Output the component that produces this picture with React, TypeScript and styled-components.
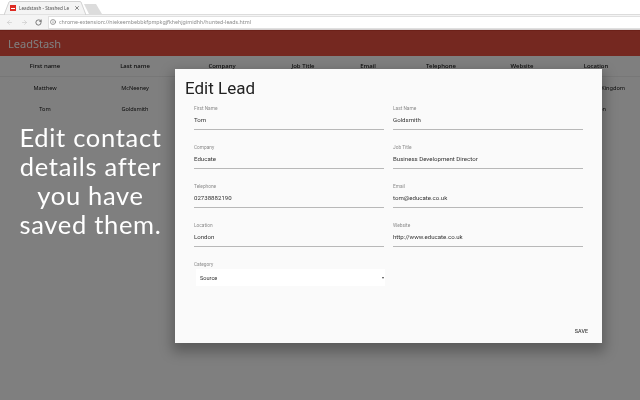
import React from "react";
import styled, { createGlobalStyle } from "styled-components";
import { ArrowLeft, ArrowRight, RotateCw, Info, X } from "lucide-react";

const Global = createGlobalStyle`
  html, body { margin: 0; padding: 0; width: 640px; height: 400px; overflow: hidden; background: #fff; }
  body { font-family: "Noto Sans", "Open Sans", sans-serif; }
`;

const Screen = styled.div`
  width: 640px; height: 400px; display: flex; flex-direction: column; overflow: hidden;
  will-change: transform; transform: translateZ(0);
`;
const TabStrip = styled.div`
  height: 14px; flex: none; display: flex; align-items: flex-end; padding-left: 4px;
  background: #fff; border-bottom: 1px solid #dcdcdc;
`;
const Tab = styled.div`
  position: relative; width: 82px; height: 14px; margin-bottom: -1px; display: flex; align-items: center;
  padding: 0 6px; box-sizing: border-box; gap: 3px;
  & > svg.shape { position: absolute; left: 0; top: 0; }
`;
const Favicon = styled.span`
  position: relative; width: 6px; height: 6px; background: #dd2a22; flex: none;
  &::after { content: ""; position: absolute; left: 1px; right: 1px; top: 3px; height: 1px; background: #fff; }
`;
const TabTitle = styled.span`
  position: relative; font-size: 4.7px; color: #555; white-space: nowrap; width: 53px;
`;
const TabClose = styled(X)`
  position: relative; flex: none; color: #444;
`;
const NewTab = styled.svg`
  flex: none; margin-left: -2px;
`;
const AddressBar = styled.div`
  height: 15px; flex: none; box-sizing: border-box; background: #f4f4f4; display: flex; align-items: center;
  padding-left: 6px; border-bottom: 1px solid #d4d0d0;
`;
const NavIcon = styled.span<{ $c: string; $w: number }>`
  width: ${(p) => p.$w}px; display: flex; color: ${(p) => p.$c}; flex: none;
`;
const UrlBox = styled.div`
  flex: 1; height: 13px; background: #fff; display: flex; align-items: center; gap: 1px; padding-left: 1px;
  box-sizing: border-box; border: 1px solid #e0e0e0; border-right: none; margin-left: 1px;
`;
const UrlText = styled.span`
  font-size: 5.3px; color: #8a8a8a; white-space: nowrap;
`;
const Page = styled.div`
  position: relative; flex: 1; display: flex; flex-direction: column; background: #fff;
`;
const Header = styled.div`
  height: 26px; flex: none; background: #ea5141; display: flex; align-items: center; padding-left: 8px;
  color: #fff; font-size: 11px; border-top: 1px solid #d84030; box-sizing: border-box;
`;
const Row = styled.div<{ $head?: boolean }>`
  display: grid; grid-template-columns: 90px 90px 84px 78px 52px 94px 68px 80px; flex: none;
  height: ${(p) => (p.$head ? 20 : 21.5)}px; align-items: center; text-align: center;
  font-size: ${(p) => (p.$head ? 6 : 5.6)}px; color: #111; font-weight: ${(p) => (p.$head ? 500 : 400)};
  white-space: nowrap;
  ${(p) => p.$head && "border-bottom: 1px solid #eee;"}
`;
const Cell = styled.span``;
const Overlay = styled.div`
  position: absolute; inset: 0; background: rgba(0, 0, 0, 0.5);
`;
const Caption = styled.div`
  position: absolute; left: 0; top: 93px; width: 181px; text-align: center; color: #fff; white-space: nowrap;
  font-family: "Lato", sans-serif; font-size: 25.5px; line-height: 29px; letter-spacing: 0.7px;
`;
const Modal = styled.div`
  position: absolute; left: 175px; top: 39px; width: 427px; height: 274px; background: #fafafa;
  box-shadow: 0 6px 12px 3px rgba(0, 0, 0, 0.28); box-sizing: border-box; padding: 8px 0 0 10px;
  display: flex; flex-direction: column;
`;
const Title = styled.div`
  font-family: "Roboto", sans-serif; font-weight: 400;
  font-size: 17px; line-height: 22px; color: #222; margin-bottom: 7px;
`;
const Form = styled.div`
  display: grid; grid-template-columns: 190px 190px; column-gap: 9px; row-gap: 15px; padding-left: 9px;
`;
const Field = styled.div`
  height: 24px; box-sizing: border-box; border-bottom: 1px solid #b8b8b8; display: flex; flex-direction: column;
  font-family: "Roboto", sans-serif;
`;
const Label = styled.span`
  font-family: "Roboto", sans-serif;
  font-size: 4.8px; line-height: 6px; color: #8c8c8c; height: 7px;
`;
const Value = styled.span`
  font-size: 6.1px; line-height: 10px; color: #333; margin-top: 2px;
`;
const CategoryField = styled.div`
  display: flex; flex-direction: column;
`;
const Select = styled.div`
  height: 17px; margin: 0 -1px 0 2px; background: #fff; display: flex; align-items: center;
  justify-content: space-between; padding: 0 1px 0 4px; font-size: 5.6px; color: #333;
  font-family: "Roboto", sans-serif;
`;
const Caret = styled.span`
  width: 0; height: 0; border: 1.5px solid transparent; border-top: 2px solid #444; margin-top: 1px;
`;
const Save = styled.button`
  position: absolute; right: 14px; bottom: 9px; border: none; background: none; padding: 0;
  font: 500 5.4px "Roboto", sans-serif; color: #444;
`;

const fields: [string, string][] = [
  ["First Name", "Tom"], ["Last Name", "Goldsmith"],
  ["Company", "Educate"], ["Job Title", "Business Development Director"],
  ["Telephone", "02738882190"], ["Email", "tom@educate.co.uk"],
  ["Location", "London"], ["Website", "http://www.educate.co.uk"],
];
const heads = ["First name", "Last name", "Company", "Job Title", "Email", "Telephone", "Website", "Location"];
const rows = [
  ["Matthew", "McNeeney", "", "", "", "", "", "Bath, United Kingdom"],
  ["Tom", "Goldsmith", "", "", "", "", "", "London"],
];

export default function App() {
  return (
    <Screen>
      <Global />
      <TabStrip>
        <Tab>
          <svg className="shape" width="82" height="14" viewBox="0 0 82 14">
            <path d="M0 14 L5 1 Q5.5 0.5 6 0.5 L76 0.5 Q76.5 0.5 77 1 L82 14 Z" fill="#f4f4f4" stroke="#c8c8c8" strokeWidth="0.8" />
          </svg>
          <Favicon />
          <TabTitle>Leadstash - Stashed Le</TabTitle>
          <TabClose size={6} strokeWidth={2.5} />
        </Tab>
        <NewTab width="18" height="10" viewBox="0 0 18 10">
          <path d="M0 0 L12 0 L18 10 L5 10 Z" fill="#dcdcdc" />
        </NewTab>
      </TabStrip>
      <AddressBar>
        <NavIcon $c="#c4c4c4" $w={15}><ArrowLeft size={7} strokeWidth={2} /></NavIcon>
        <NavIcon $c="#c4c4c4" $w={14}><ArrowRight size={7} strokeWidth={2} /></NavIcon>
        <NavIcon $c="#555" $w={12}><RotateCw size={7} strokeWidth={2.6} /></NavIcon>
        <UrlBox>
          <NavIcon $c="#666" $w={8}><Info size={6} strokeWidth={2.4} /></NavIcon>
          <UrlText>chrome-extension://niekeembebbkfpmpkgjfkhehjgimidhh/hunted-leads.html</UrlText>
        </UrlBox>
      </AddressBar>
      <Page>
        <Header>LeadStash</Header>
        <Row $head>{heads.map((h) => <Cell key={h}>{h}</Cell>)}</Row>
        {rows.map((r) => (
          <Row key={r[0]}>{r.map((c, i) => <Cell key={i}>{c}</Cell>)}</Row>
        ))}
        <Overlay />
        <Caption>Edit contact<br />details after<br />you have<br />saved them.</Caption>
        <Modal>
          <Title>Edit Lead</Title>
          <Form>
            {fields.map(([l, v]) => (
              <Field key={l}>
                <Label>{l}</Label>
                <Value>{v}</Value>
              </Field>
            ))}
            <CategoryField>
              <Label>Category</Label>
              <Select>Source<Caret /></Select>
            </CategoryField>
          </Form>
          <Save>SAVE</Save>
        </Modal>
      </Page>
    </Screen>
  );
}
